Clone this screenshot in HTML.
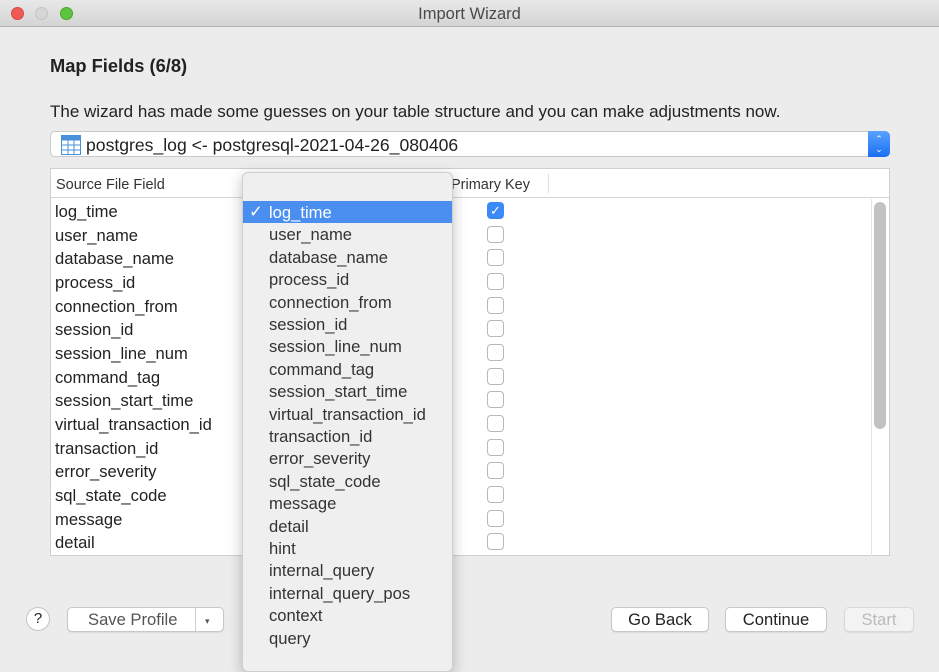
<!DOCTYPE html>
<html><head><style>
*{margin:0;padding:0;box-sizing:border-box}
body{width:939px;height:656px;overflow:hidden;background:#ececec;font-family:"Liberation Sans",sans-serif;position:relative;color:#222}
.tb{position:absolute;left:0;top:0;width:939px;height:27px;background:linear-gradient(#e8e8e8,#d4d4d4);border-bottom:1px solid #b5b5b5;text-align:center;font-size:16.5px;line-height:28px;color:#4a4a4a}
.dot{position:absolute;top:7px;width:13px;height:13px;border-radius:50%}
.abs{position:absolute}
.t{position:absolute;font-size:16.6px;white-space:nowrap;line-height:18px}
.tbl{position:absolute;left:50px;top:168px;width:840px;height:388px;background:#fff;border:1px solid #cfcfcf}
.hdr{position:absolute;left:0;top:0;width:838px;height:29px;border-bottom:1px solid #d6d6d6}
.cb{position:absolute;left:487px;width:17px;height:17px;border:1px solid #b8b8b8;border-radius:4px;background:#fff}
.pop{position:absolute;left:242px;top:172px;width:211px;height:500px;background:#efefef;border:1px solid #cfcfcf;border-radius:6px;box-shadow:0 4px 14px rgba(0,0,0,.25)}
.pi{position:absolute;left:26px;font-size:16.6px;line-height:18px;color:#333;white-space:nowrap}
.btn{position:absolute;height:25px;background:#fff;border:1px solid #c8c8c8;border-radius:5px;font-size:16.6px;text-align:center;line-height:23px;box-shadow:0 1px 1px rgba(0,0,0,.08)}
</style></head><body>
<div class="tb">Import Wizard
<div class="dot" style="left:11px;background:#ee5b55;border:1px solid #d44"></div>
<div class="dot" style="left:35px;background:#d6d6d6;border:1px solid #c4c4c4"></div>
<div class="dot" style="left:60px;background:#5cc43e;border:1px solid #4aa52f"></div>
</div>
<div class="t" style="left:50px;top:57px;font-weight:bold;font-size:18.3px">Map Fields (6/8)</div>
<div class="t" style="left:50px;top:103px;font-size:17px">The wizard has made some guesses on your table structure and you can make adjustments now.</div>
<div class="abs" style="left:50px;top:131px;width:840px;height:26px;background:#fff;border:1px solid #c9c9c9;border-radius:5px"></div>
<svg class="abs" style="left:61px;top:135px" width="20" height="20" viewBox="0 0 20 20"><rect x="0.5" y="0.5" width="19" height="19" fill="#fff" stroke="#4a90d9"/><rect x="0.5" y="0.5" width="19" height="5" fill="#4a90d9"/><path d="M0 10H20M0 15H20M7 5V20M13 5V20" stroke="#4a90d9"/></svg>
<div class="t" style="left:86px;top:136px;font-size:17.6px">postgres_log &lt;- postgresql-2021-04-26_080406</div>
<div class="abs" style="left:868px;top:131px;width:22px;height:26px;background:linear-gradient(#5aa2ff,#1a6ff0);border-radius:0 5px 5px 0;color:#fff;font-size:9px;text-align:center;line-height:10px;padding-top:3px">⌃<br>⌄</div>
<div class="tbl">
<div class="hdr"></div>
<div class="t" style="left:5px;top:7px;font-size:14.5px;color:#333">Source File Field</div>
<div class="t" style="left:400px;top:7px;font-size:14.5px;color:#333">Primary Key</div>
<div class="abs" style="left:497px;top:5px;width:1px;height:19px;background:#ddd"></div>
<div class="abs" style="left:823px;top:33px;width:12px;height:227px;background:#c2c2c2;border-radius:6px"></div>
<div class="abs" style="left:820px;top:30px;width:1px;height:357px;background:#e6e6e6"></div>
</div>
<div class="t" style="left:55px;top:203px">log_time</div>
<div class="t" style="left:55px;top:227px">user_name</div>
<div class="t" style="left:55px;top:250px">database_name</div>
<div class="t" style="left:55px;top:274px">process_id</div>
<div class="t" style="left:55px;top:298px">connection_from</div>
<div class="t" style="left:55px;top:321px">session_id</div>
<div class="t" style="left:55px;top:345px">session_line_num</div>
<div class="t" style="left:55px;top:369px">command_tag</div>
<div class="t" style="left:55px;top:392px">session_start_time</div>
<div class="t" style="left:55px;top:416px">virtual_transaction_id</div>
<div class="t" style="left:55px;top:440px">transaction_id</div>
<div class="t" style="left:55px;top:463px">error_severity</div>
<div class="t" style="left:55px;top:487px">sql_state_code</div>
<div class="t" style="left:55px;top:511px">message</div>
<div class="t" style="left:55px;top:534px">detail</div>
<div class="cb" style="top:202px;background:#3b8af5;border-color:#3b8af5;color:#fff;font-size:13px;text-align:center;line-height:15px">✓</div>
<div class="cb" style="top:226px"></div><div class="cb" style="top:249px"></div><div class="cb" style="top:273px"></div><div class="cb" style="top:297px"></div><div class="cb" style="top:320px"></div><div class="cb" style="top:344px"></div><div class="cb" style="top:368px"></div><div class="cb" style="top:391px"></div><div class="cb" style="top:415px"></div><div class="cb" style="top:439px"></div><div class="cb" style="top:462px"></div><div class="cb" style="top:486px"></div><div class="cb" style="top:510px"></div><div class="cb" style="top:533px"></div>
<div class="pop">
<div class="abs" style="left:0;top:28px;width:209px;height:22px;background:#4a8ff0"></div>
<div class="pi" style="left:6px;top:30px;color:#fff">✓</div>
<div class="pi" style="top:31px;color:#fff">log_time</div>
<div class="pi" style="top:53px">user_name</div>
<div class="pi" style="top:76px">database_name</div>
<div class="pi" style="top:98px">process_id</div>
<div class="pi" style="top:121px">connection_from</div>
<div class="pi" style="top:143px">session_id</div>
<div class="pi" style="top:165px">session_line_num</div>
<div class="pi" style="top:188px">command_tag</div>
<div class="pi" style="top:210px">session_start_time</div>
<div class="pi" style="top:233px">virtual_transaction_id</div>
<div class="pi" style="top:255px">transaction_id</div>
<div class="pi" style="top:277px">error_severity</div>
<div class="pi" style="top:300px">sql_state_code</div>
<div class="pi" style="top:322px">message</div>
<div class="pi" style="top:345px">detail</div>
<div class="pi" style="top:367px">hint</div>
<div class="pi" style="top:389px">internal_query</div>
<div class="pi" style="top:412px">internal_query_pos</div>
<div class="pi" style="top:434px">context</div>
<div class="pi" style="top:457px">query</div>
</div>
<div class="abs" style="left:26px;top:607px;width:24px;height:24px;border-radius:50%;background:#fff;border:1px solid #c4c4c4;text-align:center;font-size:15px;line-height:22px">?</div>
<div class="btn" style="left:67px;top:607px;width:157px;text-align:left;padding-left:20px;color:#555">Save Profile</div>
<div class="abs" style="left:195px;top:608px;width:1px;height:23px;background:#d0d0d0"></div>
<div class="t" style="left:205px;top:612px;font-size:9px;color:#555">▾</div>
<div class="btn" style="left:611px;top:607px;width:98px">Go Back</div>
<div class="btn" style="left:725px;top:607px;width:102px">Continue</div>
<div class="btn" style="left:844px;top:607px;width:70px;color:#bbb;background:#f3f3f3;border-color:#d8d8d8">Start</div>
</body></html>
